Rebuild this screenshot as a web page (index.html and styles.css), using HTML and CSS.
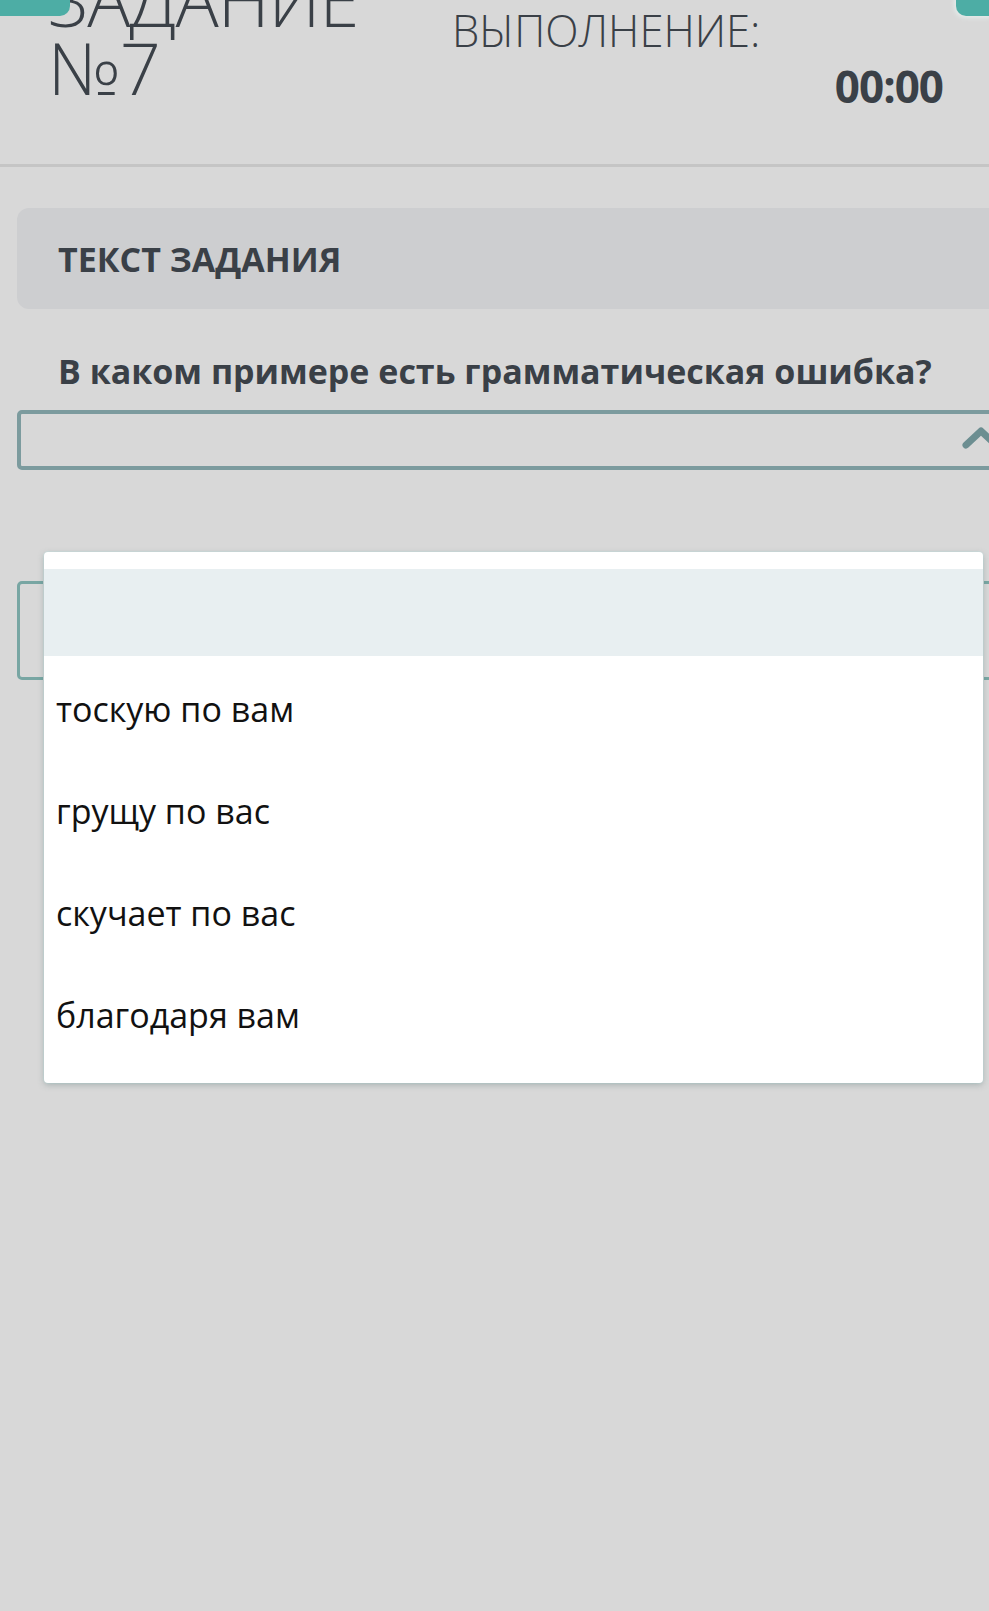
FILE: index.html
```html
<!DOCTYPE html>
<html lang="ru">
<head>
    <meta charset="UTF-8">
    <meta name="viewport" content="width=device-width, initial-scale=1.0">
    <title>Задание №7</title>
    <link rel="stylesheet" href="styles.css">
</head>
<body>
    <div class="page">
        <div class="tab tab-left"></div>
        <div class="tab tab-right"></div>

        <header class="header">
            <h1 class="task-title">ЗАДАНИЕ<br>№7</h1>
            <div class="timer">
                <span class="timer-label">ВЫПОЛНЕНИЕ:</span>
                <span class="timer-value">00:00</span>
            </div>
        </header>

        <main class="content">
            <div class="task-panel">ТЕКСТ ЗАДАНИЯ</div>
            <p class="question">В каком примере есть грамматическая ошибка?</p>

            <div class="select select-open">
                <svg class="chevron" width="40" height="26" viewBox="0 0 40 26">
                    <path d="M5 21 L20 7 L35 21" fill="none" stroke="#6c8e91" stroke-width="7" stroke-linecap="round" stroke-linejoin="round"/>
                </svg>
            </div>

            <div class="select select-next"></div>
        </main>

        <!-- открытый список вариантов -->
        <ul class="dropdown">
            <li class="option option-active"></li>
            <li class="option">тоскую по вам</li>
            <li class="option">грущу по вас</li>
            <li class="option">скучает по вас</li>
            <li class="option">благодаря вам</li>
        </ul>
    </div>
</body>
</html>
```

FILE: styles.css
```css
html, body {
    margin: 0;
    padding: 0;
}
body {
    background-color: #d8d8d8;
    font-family: "Open Sans", "Noto Sans", sans-serif;
    color: #3a4047;
    overflow: hidden;
}
.page {
    position: relative;
    width: 989px;
    height: 1611px;
    overflow: hidden;
}
.tab {
    position: absolute;
    top: 0;
    height: 16px;
    background-color: #4dada5;
}
.tab-left {
    left: 0;
    width: 70px;
    border-bottom-right-radius: 10px;
}
.tab-right {
    right: 0;
    width: 33px;
    border-bottom-left-radius: 10px;
    box-shadow: 0 0 4px 2px #e4eceb;
}
.header {
    display: flex;
    height: 167px;
    box-sizing: border-box;
    border-bottom: 3px solid #c5c5c5;
    padding-left: 48px;
}
.task-title {
    margin: -35px 0 0 0;
    font-size: 72px;
    font-weight: 300;
    line-height: 68px;
    width: 404px;
    letter-spacing: -1px;
}
.timer {
    display: flex;
    flex-direction: column;
    width: 491px;
}
.timer-label {
    font-size: 43.5px;
    font-weight: 300;
    line-height: 50px;
    margin-top: 6px;
}
.timer-value {
    align-self: flex-end;
    font-size: 44px;
    font-weight: 700;
    line-height: 50px;
    margin-top: 5px;
    letter-spacing: -1px;
}
.content {
    padding: 41px 0 0 17px;
}
.task-panel {
    width: 1000px;
    height: 101px;
    box-sizing: border-box;
    background-color: #cdced0;
    border-radius: 12px;
    padding-left: 41px;
    display: flex;
    align-items: center;
    font-size: 34px;
    font-weight: 700;
}
.question {
    margin: 39px 0 0 41px;
    font-size: 34px;
    font-weight: 700;
    line-height: 46px;
}
.select {
    position: relative;
    width: 1000px;
    box-sizing: border-box;
    border: 4px solid #7c9b9e;
    border-radius: 5px;
}
.select-open {
    height: 60px;
    margin-top: 16px;
}
.chevron {
    position: absolute;
    right: 12px;
    top: 10px;
}
.select-next {
    height: 99px;
    margin-top: 111px;
    border-width: 3px;
    border-color: #78a6a3;
}
.dropdown {
    position: absolute;
    left: 44px;
    top: 552px;
    width: 939px;
    margin: 0;
    padding: 17px 0 19px;
    list-style: none;
    background-color: #ffffff;
    border-radius: 4px;
    box-shadow: 0 2px 6px rgba(80, 110, 110, 0.35), 0 0 0 1px #d2dede;
}
.option {
    height: 102px;
    display: flex;
    align-items: center;
    padding: 3px 0 0 12px;
    box-sizing: border-box;
    font-size: 34px;
    color: #111111;
}
.option-active {
    height: 87px;
    background-color: #e8eff1;
}
```
